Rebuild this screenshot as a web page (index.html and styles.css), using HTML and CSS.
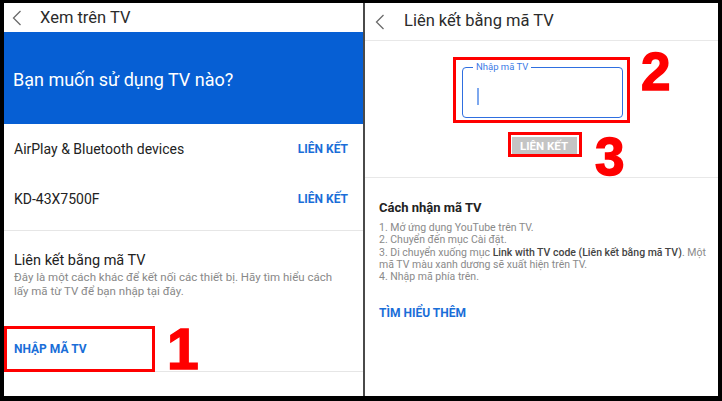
FILE: index.html
```html
<!DOCTYPE html>
<html lang="vi">
<head>
    <meta charset="UTF-8">
    <meta name="viewport" content="width=device-width, initial-scale=1.0">
    <title>Xem trên TV</title>
    <link rel="stylesheet" href="styles.css">
</head>
<body>
    <div class="frame">

        <!-- Left screen: pick a TV -->
        <div class="panel panel-left">
            <div class="topbar">
                <svg class="back" width="10" height="16" viewBox="0 0 10 16"><polyline points="8.5,1 1.5,8 8.5,15" fill="none" stroke="#6b6b6b" stroke-width="1.3"/></svg>
                <span class="topbar-title">Xem trên TV</span>
            </div>

            <div class="hero">Bạn muốn sử dụng TV nào?</div>

            <div class="devices">
                <div class="device">
                    <span>AirPlay &amp; Bluetooth devices</span>
                    <span class="link">LIÊN KẾT</span>
                </div>
                <div class="device">
                    <span>KD-43X7500F</span>
                    <span class="link">LIÊN KẾT</span>
                </div>
            </div>

            <div class="code-section">
                <div class="code-title">Liên kết bằng mã TV</div>
                <div class="code-desc">Đây là một cách khác để kết nối các thiết bị. Hãy tìm hiểu cách lấy mã từ TV để bạn nhập tại đây.</div>
            </div>

            <div class="enter-row">
                <div class="mark enter-box"><span class="link">NHẬP MÃ TV</span></div>
            </div>

            <span class="step step-1">1</span>
        </div>

        <!-- Right screen: enter the code -->
        <div class="panel panel-right">
            <div class="topbar topbar-line">
                <svg class="back" width="10" height="16" viewBox="0 0 10 16"><polyline points="8.5,1 1.5,8 8.5,15" fill="none" stroke="#6b6b6b" stroke-width="1.3"/></svg>
                <span class="topbar-title">Liên kết bằng mã TV</span>
            </div>

            <div class="code-form">
                <div class="mark input-box">
                    <div class="code-input">
                        <span class="code-label">Nhập mã TV</span>
                        <span class="caret"></span>
                    </div>
                </div>
                <div class="mark button-box">
                    <div class="link-button">LIÊN KẾT</div>
                </div>
            </div>

            <div class="howto">
                <div class="howto-title">Cách nhận mã TV</div>
                <div class="howto-list">
                    1. Mở ứng dụng YouTube trên TV.<br>
                    2. Chuyển đến mục Cài đặt.<br>
                    3. Di chuyển xuống mục <b>Link with TV code (Liên kết bằng mã TV)</b>. Một<br>
                    mã TV màu xanh dương sẽ xuất hiện trên TV.<br>
                    4. Nhập mã phía trên.
                </div>
                <div class="link more">TÌM HIỂU THÊM</div>
            </div>

            <span class="step step-2">2</span>
            <span class="step step-3">3</span>
        </div>

    </div>
</body>
</html>
```

FILE: styles.css
```css
body {
    margin: 0;
    background-color: #000;
    font-family: Roboto, "Noto Sans", sans-serif;
}
.frame {
    width: 722px;
    height: 401px;
    box-sizing: border-box;
    padding: 3px 4px 5px 4px;
    display: flex;
    gap: 2px;
    background-color: #000;
}
.frame .panel-left {
    margin-right: 0;
}
.panel {
    position: relative;
    background-color: white;
    overflow: hidden;
    display: flex;
    flex-direction: column;
}
.panel-left {
    width: 359px;
    border-right: 0;
}
.panel-right {
    flex: 1;
    box-shadow: -2px 0 0 #4a4a4a;
}

/* Top bar */
.topbar {
    height: 29px;
    flex-shrink: 0;
    display: flex;
    align-items: center;
    padding-left: 8px;
}
.topbar-line {
    height: 37px;
    padding-left: 10px;
    border-bottom: 1px solid #e8e8e8;
}
.back {
    flex-shrink: 0;
}
.topbar-title {
    margin-left: 18px;
    font-size: 16.5px;
    color: #2b2b2b;
}
.topbar-line .topbar-title {
    margin-left: 19px;
    margin-top: -3px;
}

/* Left screen */
.hero {
    height: 92px;
    flex-shrink: 0;
    background-color: #065fd4;
    color: white;
    font-size: 18px;
    display: flex;
    align-items: center;
    padding-left: 9px;
    padding-top: 2px;
    box-sizing: border-box;
}
.devices {
    padding-bottom: 6px;
    border-bottom: 1px solid #e6e6e6;
}
.device {
    height: 50px;
    display: flex;
    align-items: center;
    justify-content: space-between;
    padding: 0 15px 0 10px;
    font-size: 14px;
    color: #222;
}
.link {
    color: #1a6ed8;
    font-weight: bold;
    font-size: 12px;
}
.code-section {
    padding: 21px 30px 0 10px;
}
.code-title {
    font-size: 14.5px;
    line-height: 18px;
    color: #222;
}
.code-desc {
    font-size: 11.5px;
    line-height: 14px;
    color: #888;
}
.enter-row {
    margin-top: 28px;
    height: 45px;
    flex-shrink: 0;
    border-bottom: 1px solid #e6e6e6;
}
.mark {
    border: 3px solid #ff0000;
    box-sizing: border-box;
}
.enter-box {
    width: 151px;
    height: 46px;
    display: flex;
    align-items: center;
    padding-left: 7px;
}

/* Red step numbers drawn over the screens */
.step {
    position: absolute;
    font-family: "Liberation Sans", Arial, sans-serif;
    font-weight: bold;
    color: #ff0000;
    line-height: 1;
    -webkit-text-stroke: 1.5px #ff0000;
}
.step-1 {
    font-size: 57px;
    left: 163px;
    top: 318px;
}
.step-2 {
    font-size: 53px;
    left: 276px;
    top: 42px;
}
.step-3 {
    font-size: 53px;
    left: 230px;
    top: 127px;
}

/* Right screen */
.code-form {
    display: flex;
    flex-direction: column;
    align-items: center;
    padding: 16px 0 20px;
    border-bottom: 1px solid #e8e8e8;
}
.input-box {
    width: 177px;
    height: 66px;
    padding: 7px 4px 2px 6px;
}
.code-input {
    position: relative;
    height: 100%;
    box-sizing: border-box;
    border: 1.5px solid #2f6fe0;
    border-radius: 4px;
    padding: 20px 0 0 14px;
}
.code-label {
    position: absolute;
    top: -7px;
    left: 10px;
    padding: 0 3px;
    background-color: white;
    font-size: 9.5px;
    line-height: 12px;
    color: #3b7be6;
}
.caret {
    display: block;
    width: 1.5px;
    height: 17px;
    background-color: #7ea8ee;
}
.button-box {
    margin: 9px 0 0 6px;
    width: 74px;
    height: 25px;
    padding: 2px 2px 0 1px;
}
.link-button {
    height: 100%;
    background-color: #c4c4c4;
    color: white;
    font-size: 11.5px;
    font-weight: bold;
    display: flex;
    align-items: center;
    justify-content: center;
}
.howto {
    padding: 22px 14px 0;
}
.howto-title {
    font-size: 13px;
    font-weight: bold;
    line-height: 16px;
    color: #222;
}
.howto-list {
    margin-top: 6px;
    font-size: 10.5px;
    line-height: 12.3px;
    color: #8a8a8a;
    white-space: nowrap;
}
.howto-list b {
    color: #444;
    font-weight: 500;
}
.more {
    margin-top: 23px;
    font-size: 12px;
}
```
